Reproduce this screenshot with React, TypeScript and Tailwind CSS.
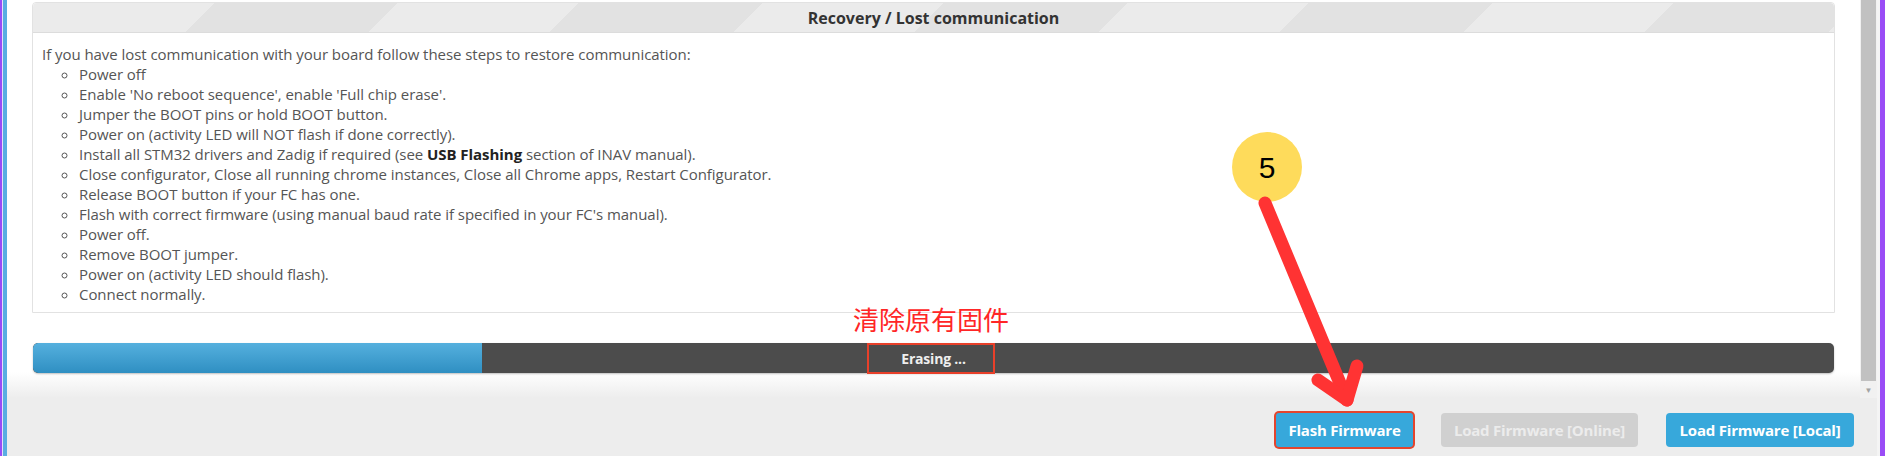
import React from 'react'

const steps: React.ReactNode[] = [
  'Power off',
  "Enable 'No reboot sequence', enable 'Full chip erase'.",
  'Jumper the BOOT pins or hold BOOT button.',
  'Power on (activity LED will NOT flash if done correctly).',
  <>
    Install all STM32 drivers and Zadig if required (see <strong className="font-bold text-[#222]">USB Flashing</strong> section of INAV manual).
  </>,
  'Close configurator, Close all running chrome instances, Close all Chrome apps, Restart Configurator.',
  'Release BOOT button if your FC has one.',
  "Flash with correct firmware (using manual baud rate if specified in your FC's manual).",
  'Power off.',
  'Remove BOOT jumper.',
  'Power on (activity LED should flash).',
  'Connect normally.',
]

function RecoveryPanel() {
  return (
    <div className="mx-[25px] mt-[2px] border border-[#e2e2e2] rounded-t-[4px] bg-white">
      <div className="h-[30px] flex items-center justify-center rounded-t-[4px] bg-[repeating-linear-gradient(135deg,#ebebeb_0px,#ebebeb_128px,#e2e2e2_128px,#e2e2e2_258px)] border-b border-[#dcdcdc]">
        <span className="text-[16px] font-bold text-[#333]">Recovery / Lost communication</span>
      </div>
      <div className="pt-[11px] pb-[8px] px-[9px] text-[15px] leading-[20px] text-[#555] tracking-[-0.05px]">
        <p>If you have lost communication with your board follow these steps to restore communication:</p>
        <ul className="list-[circle] pl-[37px]">
          {steps.map((s, i) => (
            <li key={i}>{s}</li>
          ))}
        </ul>
      </div>
    </div>
  )
}

function ProgressBar() {
  return (
    <div className="mx-[26px] mt-[30px] h-[30px] rounded-[5px] bg-[#4c4c4c] relative overflow-hidden shadow-[0_1px_2px_rgba(0,0,0,0.25)]">
      <div className="h-full w-[449px] rounded-l-[5px] bg-[linear-gradient(#55b0de,#2f8fc2)]" />
      <div className="absolute inset-0 flex items-center justify-center text-[14px] font-bold text-[#eee] tracking-[-0.2px]">
        Erasing ...
      </div>
    </div>
  )
}

export default function App() {
  return (
    <div className="relative w-[1885px] h-[456px] overflow-hidden flex bg-white" style={{ fontFamily: '"Open Sans", "Noto Sans", sans-serif' }}>
      {/* window edge */}
      <div className="w-[2px] bg-[#9a4cf6]" />
      <div className="w-[1px] bg-[#e6ddfa]" />
      <div className="w-[4px] bg-[#59aee2]" />

      <div className="flex-1 flex flex-col">
        <div className="flex h-[398px]">
          <div className="flex-1 flex flex-col bg-[linear-gradient(to_bottom,#fff_0px,#fff_372px,#ededed_398px)]">
            <RecoveryPanel />
            <ProgressBar />
          </div>
          {/* scrollbar */}
          <div className="w-[17px] flex flex-col bg-[#f1f1f1]">
            <div className="flex-1 bg-[#c1c1c1] mx-[1px]" />
            <div className="h-[17px] flex items-center justify-center text-[8px] text-[#a3a3a3]">▼</div>
          </div>
        </div>
        <div className="flex-1 bg-[#ededed] flex justify-end items-start pt-[15px] pr-[23px] gap-[26px]">
          <button className="h-[34px] w-[137px] rounded-[3px] bg-[#37a8db] text-white text-[15px] font-bold tracking-[-0.2px] ring-2 ring-[#e4452d]">
            Flash Firmware
          </button>
          <button className="h-[34px] w-[197px] rounded-[4px] bg-[#d0d0d0] text-[#ececec] text-[15px] font-bold tracking-[-0.2px] ml-[2px]">
            Load Firmware [Online]
          </button>
          <button className="h-[34px] w-[188px] rounded-[4px] bg-[#37a8db] text-white text-[15px] font-bold tracking-[-0.2px] ml-[2px]">
            Load Firmware [Local]
          </button>
        </div>
      </div>

      <div className="w-[3px] bg-[#f4f4f4]" />
      <div className="w-[5px] bg-[#9a4cf6]" />

      {/* annotations */}
      <div className="absolute left-[853px] top-[303px] text-[26px] leading-[32px] text-[#ff2626]" style={{ fontFamily: '"Noto Sans CJK SC", sans-serif' }}>
        清除原有固件
      </div>
      <div className="absolute left-[867px] top-[343px] w-[128px] h-[31px] border-2 border-[#e8402a]" />
      <div className="absolute left-[1232px] top-[132px] w-[70px] h-[70px] rounded-full bg-[#fedb5b] flex items-center justify-center text-[30px] text-black" style={{ fontFamily: '"Liberation Sans", Arial, sans-serif' }}>
        5
      </div>
      <svg className="absolute inset-0 pointer-events-none" width="1885" height="456">
        <g stroke="#ff3333" strokeWidth="13" strokeLinecap="round" strokeLinejoin="round" fill="none">
          <path d="M1265 203 L1347 400" />
          <path d="M1318 380 L1347 400 L1357 366" />
        </g>
      </svg>
    </div>
  )
}
